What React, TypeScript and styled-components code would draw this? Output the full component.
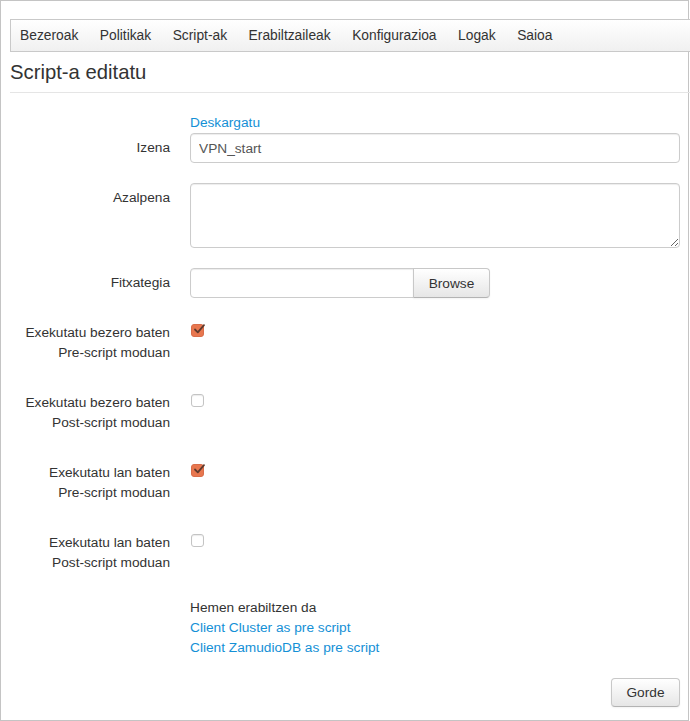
import React from "react";
import styled, { createGlobalStyle } from "styled-components";

const Global = createGlobalStyle`
  html, body { margin: 0; padding: 0; background: #fff; }
  body { font-family: "Liberation Sans", Arial, sans-serif; font-size: 13.7px; color: #333; }
  * { box-sizing: border-box; }
`;

const Frame = styled.div`
  width: 689px;
  height: 721px;
  border: 1px solid #c4c4c4;
  padding: 18px 8px 0 9px;
  overflow: visible;
`;

const NavBar = styled.nav`
  display: flex;
  align-items: center;
  gap: 21.5px;
  height: 33px;
  margin-right: -12px;
  padding-left: 9px;
  border: 1px solid #c9c9c9;
  border-right: none;
  background: linear-gradient(#ffffff, #f0f0f0);
`;

const NavItem = styled.a`
  color: #333;
  font-size: 13.8px;
  line-height: 20px;
  text-decoration: none;
`;

const Title = styled.h1`
  margin: 5px 0 5px 0;
  font-size: 20.3px;
  line-height: 30px;
  font-weight: normal;
  color: #333;
`;

const Rule = styled.div`
  height: 1px;
  background: #e5e5e5;
  margin-right: -12px;
`;

const Form = styled.form`
  margin-top: 20px;
  display: flex;
  flex-direction: column;
`;

const Row = styled.div<{ $mb?: number }>`
  display: grid;
  grid-template-columns: 160px 1fr;
  column-gap: 20px;
  margin-bottom: ${(p) => p.$mb ?? 20}px;
`;

const Label = styled.label<{ $pt?: number }>`
  text-align: right;
  padding-top: ${(p) => p.$pt ?? 5}px;
  line-height: 20px;
  font-size: 13.7px;
  color: #333;
`;

const Controls = styled.div`
  display: flex;
  flex-direction: column;
  align-items: flex-start;
`;

const Link = styled.a`
  color: #1490d6;
  text-decoration: none;
  line-height: 20px;
  font-size: 13.7px;
`;

const TextInput = styled.input<{ $w?: number }>`
  width: ${(p) => (p.$w ? `${p.$w}px` : "100%")};
  height: 30px;
  padding: 4px 8px;
  border: 1px solid #ccc;
  border-radius: 4px;
  box-shadow: inset 0 1px 1px rgba(0, 0, 0, 0.075);
  font-family: "Liberation Sans", Arial, sans-serif;
  font-size: 13.7px;
  color: #555;
  outline: none;
`;

const TextArea = styled.textarea`
  width: 100%;
  height: 65px;
  padding: 4px 8px;
  border: 1px solid #ccc;
  border-radius: 4px;
  box-shadow: inset 0 1px 1px rgba(0, 0, 0, 0.075);
  font-family: "Liberation Sans", Arial, sans-serif;
  font-size: 13.7px;
  display: block;
  outline: none;
`;

const FileGroup = styled.div`
  display: flex;
`;

const Button = styled.button<{ $attached?: boolean; $h?: number; $w: number }>`
  width: ${(p) => p.$w}px;
  height: ${(p) => p.$h ?? 30}px;
  padding: 0;
  font-family: "Liberation Sans", Arial, sans-serif;
  font-size: 13.7px;
  color: #333;
  background: linear-gradient(#ffffff, #e6e6e6);
  border: 1px solid #c8c8c8;
  border-bottom-color: #b3b3b3;
  border-radius: ${(p) => (p.$attached ? "0 4px 4px 0" : "4px")};
  margin-left: ${(p) => (p.$attached ? "-1px" : "0")};
  box-shadow: inset 0 1px 0 rgba(255, 255, 255, 0.2), 0 1px 2px rgba(0, 0, 0, 0.05);
`;

const FileInput = styled(TextInput)`
  border-radius: 4px 0 0 4px;
`;

const CheckBox = styled.span<{ $checked?: boolean }>`
  position: relative;
  display: block;
  width: 13px;
  height: 13px;
  margin: 6px 0 0 1px;
  border-radius: 3px;
  border: 1px solid ${(p) => (p.$checked ? "#d86d4a" : "#c4c4c4")};
  background: ${(p) => (p.$checked ? "#e8774f" : "#fff")};
  box-shadow: ${(p) => (p.$checked ? "none" : "inset 0 1px 1px rgba(0,0,0,0.08)")};
`;

const CheckMark = styled.svg`
  position: absolute;
  left: 1px;
  top: -2px;
  overflow: visible;
`;

const PlainText = styled.div`
  line-height: 20px;
  font-size: 13.7px;
  color: #333;
`;

const Footer = styled.div`
  display: flex;
  justify-content: flex-end;
`;

const navItems = ["Bezeroak", "Politikak", "Script-ak", "Erabiltzaileak", "Konfigurazioa", "Logak", "Saioa"];

const checks: { l1: string; l2: string; checked: boolean }[] = [
  { l1: "Exekutatu bezero baten", l2: "Pre-script moduan", checked: true },
  { l1: "Exekutatu bezero baten", l2: "Post-script moduan", checked: false },
  { l1: "Exekutatu lan baten", l2: "Pre-script moduan", checked: true },
  { l1: "Exekutatu lan baten", l2: "Post-script moduan", checked: false },
];

function Check({ checked }: { checked: boolean }) {
  return (
    <CheckBox $checked={checked}>
      {checked && (
        <CheckMark width="12" height="12" viewBox="0 0 12 12">
          <path d="M2 6.5 L4.8 9.3 L11 2.2" fill="none" stroke="#5e3a2d" strokeWidth="1.8" strokeLinecap="round" strokeLinejoin="round" />
        </CheckMark>
      )}
    </CheckBox>
  );
}

export default function App() {
  return (
    <>
      <Global />
      <Frame>
        <NavBar>
          {navItems.map((n) => (
            <NavItem key={n} href="#">{n}</NavItem>
          ))}
        </NavBar>
        <Title>Script-a editatu</Title>
        <Rule />
        <Form onSubmit={(e) => e.preventDefault()}>
          <Row>
            <Label $pt={25}>Izena</Label>
            <Controls>
              <Link href="#">Deskargatu</Link>
              <TextInput defaultValue="VPN_start" />
            </Controls>
          </Row>
          <Row>
            <Label>Azalpena</Label>
            <Controls>
              <TextArea />
            </Controls>
          </Row>
          <Row>
            <Label>Fitxategia</Label>
            <Controls>
              <FileGroup>
                <FileInput $w={224} />
                <Button type="button" $attached $w={77}>Browse</Button>
              </FileGroup>
            </Controls>
          </Row>
          {checks.map((c, i) => (
            <Row key={i} $mb={25}>
              <Label>
                {c.l1}
                <br />
                {c.l2}
              </Label>
              <Controls>
                <Check checked={c.checked} />
              </Controls>
            </Row>
          ))}
          <Row>
            <span />
            <Controls>
              <PlainText>Hemen erabiltzen da</PlainText>
              <Link href="#">Client Cluster as pre script</Link>
              <Link href="#">Client ZamudioDB as pre script</Link>
            </Controls>
          </Row>
          <Footer>
            <Button type="submit" $h={29} $w={69}>Gorde</Button>
          </Footer>
        </Form>
      </Frame>
    </>
  );
}
